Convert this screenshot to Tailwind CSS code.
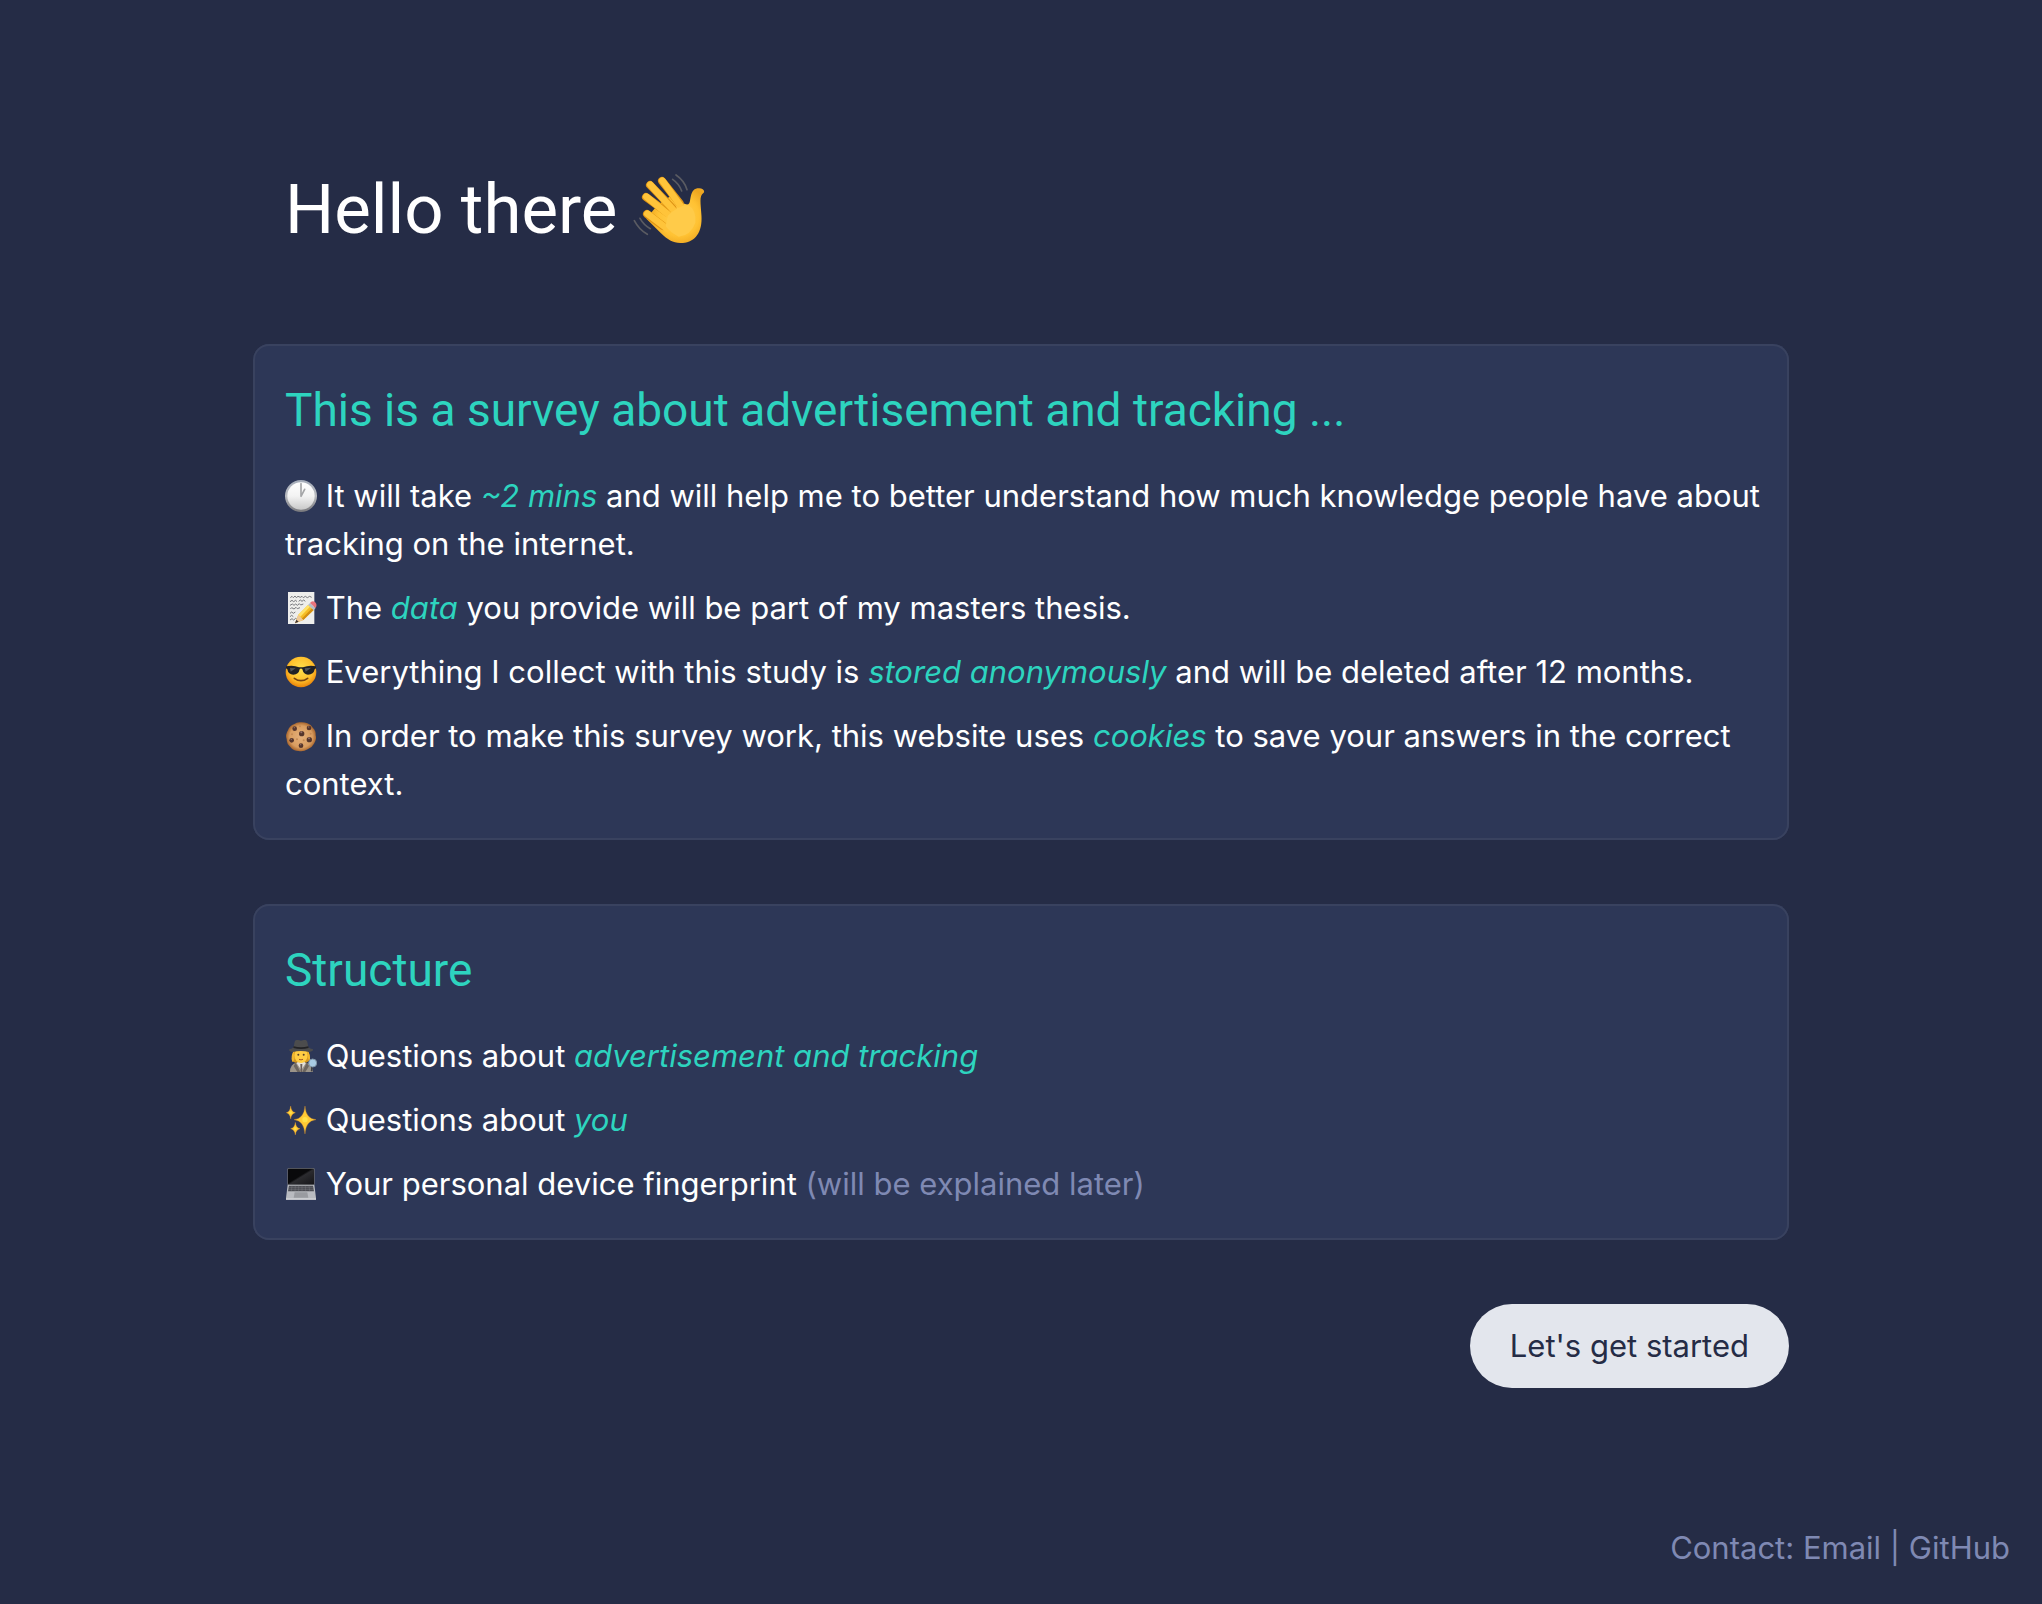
<!DOCTYPE html>
<html lang="en">
<head>
<meta charset="utf-8">
<meta name="viewport" content="width=device-width, initial-scale=1">
<title>Survey about advertisement and tracking</title>
<script src="https://cdn.jsdelivr.net/npm/@tailwindcss/browser@4"></script>
</head>
<body class="flex min-h-screen flex-col bg-[#252c46] font-['Inter',sans-serif] text-[31px] leading-[48px] text-white">
<main class="mx-auto w-full max-w-[1536px] pt-42">
  <h1 class="mb-23 flex items-center gap-4 px-8 font-['Roboto',sans-serif] text-[69px] leading-21">
    Hello there
    <svg class="size-18" viewBox="18 24 216 216" role="img" aria-label="Waving hand">
      <defs>
        <radialGradient id="palm" cx="155" cy="150" r="110" gradientUnits="userSpaceOnUse">
          <stop offset="0" stop-color="#ffd053"/><stop offset=".55" stop-color="#ffc233"/><stop offset=".85" stop-color="#eda51f"/><stop offset="1" stop-color="#f0ad28"/>
        </radialGradient>
      </defs>
      <g fill="none" stroke="#5a5b62" stroke-width="5" stroke-linecap="round">
        <path d="M147 27Q172 44 180 71M137 40Q157 54 164 75M22 164Q36 191 61 205M39 157Q50 177 70 188"/>
      </g>
      <path d="M92 116L140 84C160 106 172 117 184 115C194 111 185 72 211 67C225 64 235 73 230 80C216 89 221 110 223 144C228 199 204 231 160 231C137 231 122 221 102 202L58 158Z" fill="url(#palm)"/>
      <g fill="none" stroke="#df9414" stroke-width="24" stroke-linecap="round">
        <path d="M60 144L108 180"/><path d="M57 93L121 140"/><path d="M69 57L136 126"/><path d="M105 45L158 112"/>
      </g>
      <g fill="none" stroke="#ffc43a" stroke-width="20" stroke-linecap="round">
        <path d="M61 143L120 188"/><path d="M58 92L134 154"/><path d="M70 56L148 142"/><path d="M106 44L164 124"/>
      </g>
      <path d="M122 150Q150 120 183 117Q208 130 205 170Q192 208 155 212Q130 200 116 181Z" fill="#ffcb49"/>
    </svg>
  </h1>

  <section class="mb-16 rounded-2xl bg-[#2d3757] p-8 pr-6 ring-2 ring-[#39425f] ring-inset">
    <h2 class="mb-7 font-['Roboto',sans-serif] text-[46px] leading-17 text-[#2dd4bf]">This is a survey about advertisement and tracking ...</h2>
    <ul class="flex flex-col gap-4">
      <li>
        <svg class="inline size-8 align-[-5px]" viewBox="15 15 96 96" role="img" aria-label="Clock">
          <defs>
            <linearGradient id="rim" x1="0" y1="0" x2="0" y2="1"><stop offset="0" stop-color="#a5adba"/><stop offset=".5" stop-color="#b9bbc0"/><stop offset="1" stop-color="#77777b"/></linearGradient>
            <linearGradient id="dial" x1="0" y1="0" x2="0" y2="1"><stop offset="0" stop-color="#fff"/><stop offset=".5" stop-color="#f3f3f3"/><stop offset="1" stop-color="#c9c9c9"/></linearGradient>
          </defs>
          <circle cx="63" cy="63" r="48" fill="url(#rim)"/><circle cx="63" cy="63" r="41" fill="url(#dial)"/>
          <path d="M63 26V64L74 43" fill="none" stroke="#a5a6a8" stroke-width="5" stroke-linecap="round" stroke-linejoin="round"/>
        </svg>
        It will take <em class="text-[#2dd4bf]">~2 mins</em> and will help me to better understand how much knowledge people have about tracking on the internet.
      </li>
      <li>
        <svg class="inline size-8 align-[-5px]" viewBox="15 12 96 96" role="img" aria-label="Memo">
          <path d="M24 12H103V108H24Z" fill="#eeeeec"/>
          <g fill="none" stroke="#77787c" stroke-width="3">
            <path d="M31 29l5-4 4 4 5-5 4 5 5-4 7 3 5-3 4 4 6-4 6 4 7-4 6 3M30 41l6-4 5 4 6-4 4 4M56 40l5-4 5 4 5-4 5 4M30 52l7-4 5 4 5-4 5 4 6-5 4 4 8-3M31 63l4-4 7 4 6-5 4 4 8-3M30 76l5-4 5 4 6-4M30 86l5-4 5 4M30 96l6-4 5 4 6-5 5 4"/>
          </g>
          <path d="M45 106L55 80L84 51L101 66L70 96Z" fill="#f6bd25"/>
          <path d="M55 80L84 51L90 56L61 86Z" fill="#ffe268"/><path d="M65 92L96 61L101 66L70 96Z" fill="#d48f12"/>
          <path d="M45 106L55 80L70 96Z" fill="#efc998"/><path d="M45 106L49 95L56 101Z" fill="#3e3435"/>
          <path d="M84 51L90 45L107 60L101 66Z" fill="#b8bec5"/>
          <path d="M90 45Q96 36 105 42Q113 49 107 60Z" fill="#e9737b"/>
        </svg>
        The <em class="text-[#2dd4bf]">data</em> you provide will be part of my masters thesis.
      </li>
      <li>
        <svg class="inline size-8 align-[-5px]" viewBox="15 12 96 96" role="img" aria-label="Smiling face with sunglasses">
          <defs><radialGradient id="face" cx=".5" cy=".4" r=".6"><stop offset="0" stop-color="#ffe04d"/><stop offset=".65" stop-color="#ffc02c"/><stop offset="1" stop-color="#e98208"/></radialGradient></defs>
          <circle cx="63" cy="60" r="46" fill="url(#face)"/>
          <path d="M18 43Q40 38 57 46H69Q88 38 108 43V49L104 52Q101 68 84 68Q71 68 67 52Q63 47 59 52Q56 68 40 68Q25 68 22 52L18 49Z" fill="#202126"/>
          <path d="M30 48L47 49L32 59ZM74 49L94 47L77 59Z" fill="#50545b"/>
          <path d="M43 79Q63 93 83 79" fill="none" stroke="#774411" stroke-width="5" stroke-linecap="round"/>
        </svg>
        Everything I collect with this study is <em class="text-[#2dd4bf]">stored anonymously</em> and will be deleted after 12 months.
      </li>
      <li>
        <svg class="inline size-8 align-[-5px]" viewBox="15 12 96 96" role="img" aria-label="Cookie">
          <defs><radialGradient id="cookie"><stop offset="0" stop-color="#e5b07b"/><stop offset=".75" stop-color="#d99d60"/><stop offset="1" stop-color="#a9672f"/></radialGradient></defs>
          <path d="M61 19Q72 18 82 22Q93 25 99 36Q108 44 107 58Q111 70 102 83Q96 95 83 100Q70 108 56 105Q40 105 31 93Q20 84 20 70Q15 56 24 43Q28 29 43 24Q51 18 61 19Z" fill="url(#cookie)"/>
          <g fill="#55352b"><circle cx="44" cy="38" r="7"/><circle cx="87" cy="36" r="7"/><circle cx="65" cy="53" r="8"/><circle cx="35" cy="73" r="7"/><circle cx="88" cy="71" r="8"/><circle cx="63" cy="89" r="7"/></g>
          <g fill="#947069"><circle cx="43" cy="35" r="2"/><circle cx="86" cy="33" r="2"/><circle cx="64" cy="49" r="3"/><circle cx="34" cy="70" r="2"/><circle cx="87" cy="67" r="3"/><circle cx="62" cy="86" r="2"/></g>
          <g fill="#c68a53"><circle cx="60" cy="31" r="3"/><circle cx="36" cy="55" r="3"/><circle cx="51" cy="70" r="3"/><circle cx="71" cy="73" r="3"/><circle cx="92" cy="53" r="3"/></g>
        </svg>
        In order to make this survey work, this website uses <em class="text-[#2dd4bf]">cookies</em> to save your answers in the correct context.
      </li>
    </ul>
  </section>

  <section class="mb-16 rounded-2xl bg-[#2d3757] p-8 pr-6 ring-2 ring-[#39425f] ring-inset">
    <h2 class="mb-7 font-['Roboto',sans-serif] text-[46px] leading-17 text-[#2dd4bf]">Structure</h2>
    <ul class="flex flex-col gap-4">
      <li>
        <svg class="inline size-8 align-[-5px]" viewBox="15 12 96 96" role="img" aria-label="Detective">
          <path d="M42 43Q34 61 36 76L47 80H78L88 74Q89 57 83 42Z" fill="#d5981f"/>
          <path d="M30 108Q30 84 50 80H76Q98 84 99 108Z" fill="#9b9489"/>
          <path d="M54 77H73L77 82L64 102L50 82Z" fill="#e4e0d8"/>
          <path d="M47 80L61 108H52L41 90ZM80 80L67 108H76L87 90Z" fill="#6d665f"/><path d="M61 84H67L66 108H62Z" fill="#6b5f5a"/>
          <ellipse cx="63" cy="58" rx="20" ry="23" fill="#ffcd43"/>
          <path d="M43 48Q46 76 37 77Q31 60 42 43ZM82 46Q82 70 89 74Q93 55 82 43Z" fill="#f0b62e"/>
          <circle cx="55" cy="56" r="3" fill="#58402a"/><circle cx="71" cy="56" r="3" fill="#58402a"/><path d="M57 70Q63 73 69 70" fill="none" stroke="#a65a22" stroke-width="3"/>
          <path d="M28 40Q37 39 41 33L44 17Q47 10 55 12L63 14L71 12Q80 10 82 18L85 33Q90 39 99 40Q101 45 88 48Q62 42 38 48Q26 46 28 40Z" fill="#4c4c4d"/><path d="M41 31Q63 37 85 31L86 36Q63 42 40 36Z" fill="#232326"/>
          <path d="M96 92L95 106" stroke="#3c3c42" stroke-width="5"/><circle cx="98" cy="81" r="12" fill="#a9cbe3" stroke="#7f94a6" stroke-width="3"/>
        </svg>
        Questions about <em class="text-[#2dd4bf]">advertisement and tracking</em>
      </li>
      <li>
        <svg class="inline size-8 align-[-5px]" viewBox="15 12 96 96" role="img" aria-label="Sparkles">
          <g fill="#ffc934" stroke="#e3952b" stroke-width="1">
            <path d="M75 18Q77 56 108 59Q77 62 75 102Q72 62 42 59Q72 56 75 18Z"/>
            <path d="M32 18Q34 36 46 38Q34 40 32 57Q30 40 19 38Q30 36 32 18Z"/>
            <path d="M46 67Q48 84 60 86Q48 88 46 105Q44 88 32 86Q44 84 46 67Z"/>
          </g>
          <circle cx="75" cy="59" r="8" fill="#ffe14a"/><circle cx="32" cy="38" r="4" fill="#ffe14a"/><circle cx="46" cy="86" r="4" fill="#ffe14a"/>
        </svg>
        Questions about <em class="text-[#2dd4bf]">you</em>
      </li>
      <li>
        <svg class="inline size-8 align-[-5px]" viewBox="15 12 96 96" role="img" aria-label="Laptop">
          <defs><linearGradient id="screen" x1="0" y1="0" x2="1" y2="1"><stop offset=".45" stop-color="#09090b"/><stop offset=".52" stop-color="#2b2b2f"/><stop offset="1" stop-color="#151518"/></linearGradient></defs>
          <rect x="22" y="12" width="82" height="52" rx="4" fill="#6b6d73"/><rect x="24" y="14" width="78" height="48" rx="2" fill="url(#screen)"/>
          <path d="M23 62H103L108 102V107H18V102Z" fill="#b9bbc0"/>
          <path d="M27 65H99L102 82H24Z" fill="#4b4c52"/><path d="M26 70H100M25 76H101M36 65L34 82M46 65L45 82M56 65V82M66 65V82M76 65L77 82M87 65L89 82" stroke="#888a90" stroke-width="1"/>
          <path d="M44 85H82L85 101H41Z" fill="#999ba0"/><path d="M18 103H108V107H18Z" fill="#d4d5d8"/>
        </svg>
        Your personal device fingerprint <span class="text-[#7f89b3]">(will be explained later)</span>
      </li>
    </ul>
  </section>

  <div class="flex justify-end">
    <button type="button" class="cursor-pointer rounded-full bg-[#e3e6ed] px-10 py-[18px] text-[#252c46]">Let's get started</button>
  </div>
</main>
<footer class="mt-auto px-8 pt-16 pb-8 text-right text-[#7f89b3]">Contact: <a href="#email">Email</a> | <a href="#github">GitHub</a></footer>
</body>
</html>
